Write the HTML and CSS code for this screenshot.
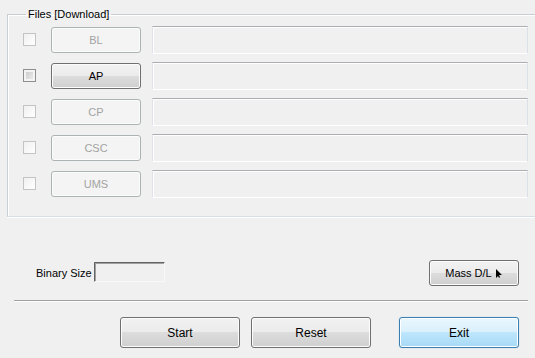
FILE: index.html
```html
<!DOCTYPE html>
<html lang="en">
<head>
    <meta charset="UTF-8">
    <meta name="viewport" content="width=device-width, initial-scale=1.0">
    <title>Files [Download]</title>
    <link rel="stylesheet" href="styles.css">
</head>
<body>

    <!-- Files group -->
    <fieldset class="files">
        <legend>Files [Download]</legend>

        <div class="file-row">
            <span class="check"></span>
            <button class="btn" disabled>BL</button>
            <span class="path"></span>
        </div>
        <div class="file-row">
            <span class="check active"></span>
            <button class="btn">AP</button>
            <span class="path"></span>
        </div>
        <div class="file-row">
            <span class="check"></span>
            <button class="btn" disabled>CP</button>
            <span class="path"></span>
        </div>
        <div class="file-row">
            <span class="check"></span>
            <button class="btn" disabled>CSC</button>
            <span class="path"></span>
        </div>
        <div class="file-row">
            <span class="check"></span>
            <button class="btn" disabled>UMS</button>
            <span class="path"></span>
        </div>
    </fieldset>

    <!-- Binary size + mass download -->
    <div class="options">
        <label class="size-label">Binary Size <span class="size-box"></span></label>
        <button class="btn mass">Mass D/L
            <svg class="cursor" width="7" height="9" viewBox="0 0 7 9"><path d="M0 0 L0 9 L2 7 L3 9 L4 8 L3 6 L6 6 Z" fill="#000"/></svg>
        </button>
    </div>

    <hr class="sep">

    <!-- Actions -->
    <div class="actions">
        <button class="btn big">Start</button>
        <button class="btn big">Reset</button>
        <button class="btn big focus">Exit</button>
    </div>

</body>
</html>
```

FILE: styles.css
```css
* {
    margin: 0;
    padding: 0;
    box-sizing: border-box;
    font-family: 'Liberation Sans', Arial, sans-serif;
}
body {
    background: #f0f0f0;
    width: 535px;
    height: 358px;
    overflow: hidden;
    color: #000;
    font-size: 11px;
}
.files {
    margin: 7px 0 0 7px;
    width: 528px;
    height: 210px;
    border: 1px solid #d5dfe5;
    border-right: none;
    border-top-color: #c9ced2;
    border-left-color: #c9ced2;
    box-shadow: inset 1px 1px 0 #fff, 0 1px 0 #fff;
    padding: 5px 0 0 14px;
    display: flex;
    flex-direction: column;
    gap: 9px;
}
.files legend {
    margin-left: 4px;
    padding: 0 2px;
    font-size: 11px;
    line-height: 14px;
}
.file-row {
    display: flex;
    align-items: center;
    height: 27px;
}
.check {
    width: 13px;
    height: 13px;
    border: 1px solid #c4c4c4;
    background: linear-gradient(135deg, #f0f0f0, #fff);
    margin-left: 1px;
}
.check.active {
    border-color: #8e8f8f;
    box-shadow: inset 0 0 0 2px #f4f4f4;
    background: linear-gradient(135deg, #c8c8c8, #f0f0f0);
}
.btn {
    height: 26px;
    border: 1px solid #707070;
    border-radius: 3px;
    background: linear-gradient(#f2f2f2 0%, #ebebeb 50%, #dddddd 50%, #cfcfcf 100%);
    box-shadow: inset 0 0 0 1px #fcfcfc;
    font-size: 11px;
    color: #000;
}
.btn:disabled {
    border-color: #adb2b5;
    background: #f4f4f4;
    color: #a3a3a3;
}
.file-row .btn {
    width: 90px;
    margin-left: 15px;
}
.path {
    width: 376px;
    height: 28px;
    margin-left: 11px;
    border: 1px solid #fff;
    border-top-color: #abadb3;
    border-left-color: #e2e3ea;
    border-right-color: #dbdfe6;
    box-shadow: inset 1px 1px 0 #fff;
    background: #f0f0f0;
}
.options {
    display: flex;
    justify-content: space-between;
    align-items: center;
    margin: 43px 16px 0 36px;
}
.size-label {
    display: flex;
    align-items: center;
    gap: 2px;
}
.size-box {
    width: 71px;
    height: 20px;
    margin-top: -2px;
    border: 1px solid #f8f8f8;
    border-top-color: #646464;
    border-left-color: #646464;
    box-shadow: inset 1px 1px 0 #a0a0a0;
}
.mass {
    width: 90px;
    height: 26px;
    display: flex;
    align-items: center;
    justify-content: center;
    gap: 4px;
}
.sep {
    border: none;
    border-top: 1px solid #a0a0a0;
    border-bottom: 1px solid #fff;
    margin: 14px 7px 0 14px;
}
.actions {
    display: flex;
    justify-content: flex-end;
    gap: 11px;
    margin: 15px 16px 0 0;
}
.big {
    width: 120px;
    height: 31px;
    font-size: 12px;
}
.big.focus {
    margin-left: 17px;
    border-color: #3c7fb1;
    background: linear-gradient(#eaf6fd 0%, #d9f0fc 50%, #bee6fd 50%, #a7d9f5 100%);
    box-shadow: inset 0 0 0 1px #fff, 0 0 1px #7fbfe8;
}
```
